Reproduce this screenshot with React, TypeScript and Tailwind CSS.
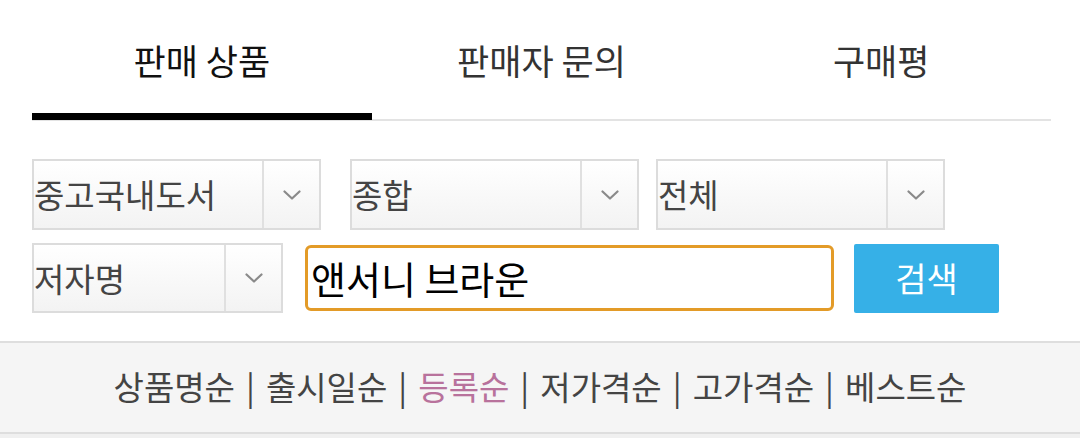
import React from "react";

const font = { fontFamily: '"Noto Sans CJK KR", "Noto Sans", sans-serif' };

function Chevron() {
  return (
    <svg width="18" height="10" viewBox="0 0 18 10" fill="none">
      <path d="M1.5 1.5 L9 8.5 L16.5 1.5" stroke="#8a8a8a" strokeWidth="2.2" strokeLinecap="round" strokeLinejoin="round" />
    </svg>
  );
}

function Select({ label, width, h }: { label: string; width: string; h: string }) {
  return (
    <div className={`${width} ${h} flex border-2 border-[#dcdcdc] bg-gradient-to-b from-white to-[#f3f3f3]`}>
      <div className="flex-1 flex items-center text-[33px] text-[#444] leading-none">{label}</div>
      <div className="w-[57px] flex items-center justify-center border-l-2 border-[#e0e0e0]">
        <Chevron />
      </div>
    </div>
  );
}

export default function App() {
  const tabs = ["판매 상품", "판매자 문의", "구매평"];
  const sorts = ["상품명순", "출시일순", "등록순", "저가격순", "고가격순", "베스트순"];
  return (
    <div className="w-[1080px] h-[438px] bg-white overflow-hidden" style={font}>
      <div className="ml-[32px] w-[1019px] h-[121px] flex border-b-2 border-[#e3e3e3]">
        {tabs.map((t, i) => (
          <div key={t} className="flex-1 flex flex-col">
            <div className={`flex-1 flex items-center justify-center pt-[6px] text-[35px] leading-none ${i === 0 ? "text-[#111]" : "text-[#333]"}`}>
              {t}
            </div>
            <div className={`h-[7px] -mb-[1px] ${i === 0 ? "bg-black" : "bg-transparent"}`} />
          </div>
        ))}
      </div>

      <div className="pl-[32px] pt-[38px] flex">
        <Select label="중고국내도서" width="w-[289px]" h="h-[71px]" />
        <div className="w-[29px]" />
        <Select label="종합" width="w-[289px]" h="h-[71px]" />
        <div className="w-[17px]" />
        <Select label="전체" width="w-[289px]" h="h-[71px]" />
      </div>

      <div className="pl-[32px] pt-[13px] flex items-center">
        <Select label="저자명" width="w-[251px]" h="h-[70px]" />
        <div className="ml-[22px] w-[529px] h-[66px] border-[3px] border-[#e39b28] rounded-[6px] flex items-center pl-[3px] text-[38px] text-black leading-none">
          앤서니 브라운
        </div>
        <div className="ml-[20px] w-[145px] h-[69px] bg-[#36b0e7] rounded-[2px] flex items-center justify-center text-white text-[34px] leading-none">
          검색
        </div>
      </div>

      <div className="mt-[28px] h-[93px] bg-[#f5f5f5] border-y-2 border-[#dedede] flex items-center justify-center text-[33px] text-[#444] leading-none pb-[3px]">
        {sorts.map((s, i) => (
          <React.Fragment key={s}>
            {i > 0 && <span className="mx-[11px] text-[#444]">|</span>}
            <span className={s === "등록순" ? "text-[#b8729c]" : ""}>{s}</span>
          </React.Fragment>
        ))}
      </div>
      <div className="h-[10px] bg-[#f0f0f0]" />
    </div>
  );
}
